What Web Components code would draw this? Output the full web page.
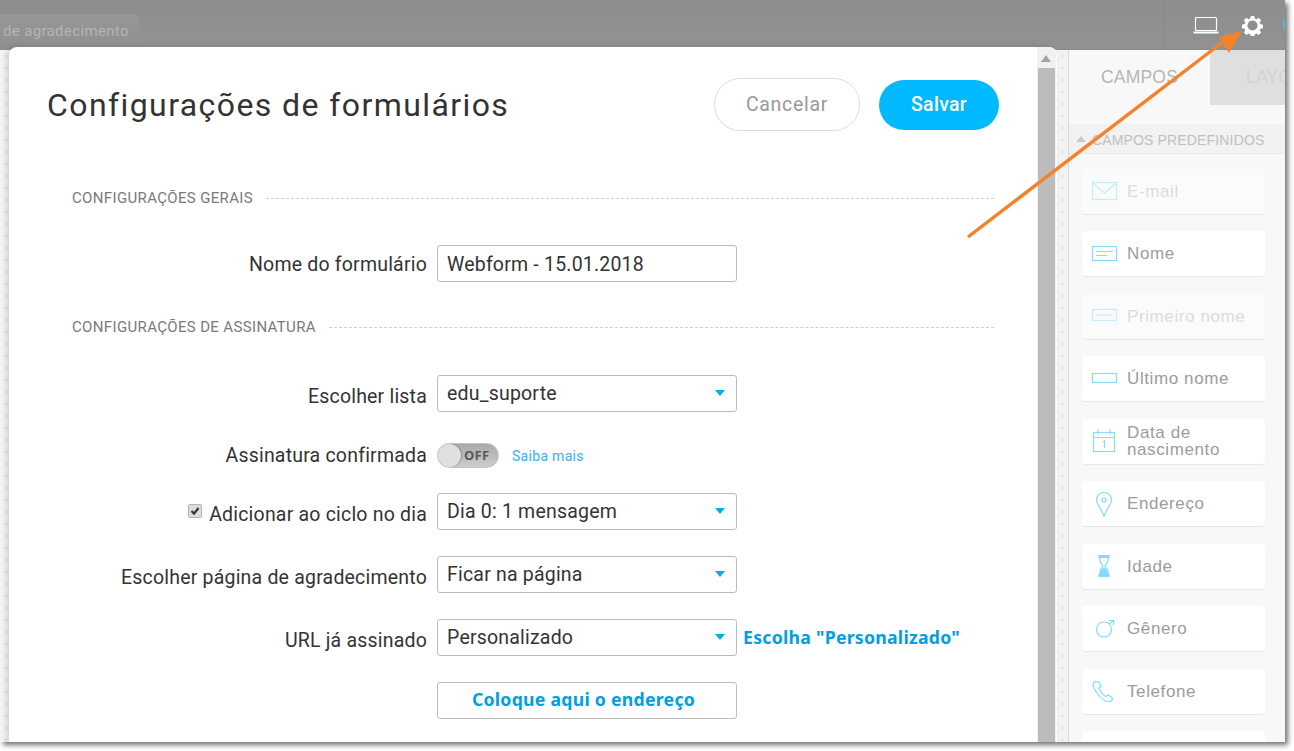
<!DOCTYPE html>
<html lang="pt"><head><meta charset="utf-8"><title>Configurações de formulários</title>
<style>
html,body{margin:0;padding:0;background:#fff;overflow:hidden}
body{width:1294px;height:751px;font-family:Roboto,sans-serif}
</style></head><body>
<app-window>
  <top-bar slot="top"></top-bar>
  <side-panel slot="side"></side-panel>
  <form-modal slot="modal">
    <section-title style="margin-top:26px">Configurações gerais</section-title>
    <form-row style="margin-top:39px" label-top="9"><span slot="label">Nome do formulário</span><field-box>Webform - 15.01.2018</field-box></form-row>
    <section-title style="margin-top:37px">Configurações de assinatura</section-title>
    <form-row style="margin-top:40px" label-top="11"><span slot="label">Escolher lista</span><field-box arrow>edu_suporte</field-box></form-row>
    <form-row style="margin-top:31px" label-top="0"><span slot="label">Assinatura confirmada</span><toggle-switch></toggle-switch><a-link>Saiba mais</a-link></form-row>
    <form-row style="margin-top:25px" label-top="11"><span slot="label"><check-mark></check-mark>Adicionar ao ciclo no dia</span><field-box arrow>Dia 0: 1 mensagem</field-box></form-row>
    <form-row style="margin-top:26px" label-top="11"><span slot="label">Escolher página de agradecimento</span><field-box arrow>Ficar na página</field-box></form-row>
    <form-row style="margin-top:26px" label-top="11"><span slot="label">URL já assinado</span><field-box arrow>Personalizado</field-box><note-text>Escolha "Personalizado"</note-text></form-row>
    <form-row style="margin-top:26px" label-top="0"><span slot="label"></span><field-box center><note-text>Coloque aqui o endereço</note-text></field-box></form-row>
  </form-modal>
  <arrow-note slot="over"></arrow-note>
</app-window>
<script>
function def(name, css, html, init){
  customElements.define(name, class extends HTMLElement{
    constructor(){super();const r=this.attachShadow({mode:'open'});r.innerHTML='<style>'+css+'</style>'+html;if(init)init(this,r);}
  });
}
def('app-window',`
:host{display:block;position:relative;width:1285px;height:742px;background:#f5f5f5;box-shadow:3px 3px 5px rgba(0,0,0,.55);overflow:visible}
.clip{position:absolute;inset:0;overflow:hidden;display:grid;grid-template-rows:50px 692px;grid-template-columns:1285px}
.main{display:flex;min-height:0;min-width:0}
.left{width:1057px;flex:none;background-color:#f4f4f4;background-image:radial-gradient(#dedede 1px,transparent 1.2px);background-size:12px 12px}
.dots{width:11px;flex:none;background-color:#f2f2f2;background-image:radial-gradient(#e2e2e2 1px,transparent 1.3px);background-size:11px 12px;border-right:1px solid #d8d8d8}
.modalwrap{position:absolute;left:9px;top:47px;bottom:0;width:1048px}
`,`<div class="clip"><slot name="top"></slot><div class="main"><div class="left"></div><div class="dots"></div><slot name="side"></slot></div>
<div class="modalwrap"><slot name="modal"></slot></div></div><slot name="over"></slot>`);

def('top-bar',`
:host{display:flex;align-items:flex-start;height:50px;position:relative;background:linear-gradient(#8d8d8d,#929292);box-shadow:inset 0 -1px 0 #8b8b8b}
.tab{margin-top:14px;width:141px;height:36px;box-sizing:border-box;background:linear-gradient(#979797,#8f8f8f);color:#b4b4b4;font:15px/34px Roboto,sans-serif;letter-spacing:.35px;padding-left:3px;white-space:nowrap;clip-path:polygon(0 0,134px 0,139px 4px,141px 100%,0 100%)}
.sp{flex:1}
.sep{width:1px;height:50px;background:#8a8a8a;margin-right:29px}
.lap{margin:16px 21px 0 0}
.gear{margin:15px 22px 0 2px}
.blip{width:2px;height:10px;margin-top:20px;background:#4fb9e0;border-radius:2px 0 0 2px;position:absolute;right:0;top:0}
`,`<div class="tab">de agradecimento</div><div class="sp"></div><div class="sep"></div>
<svg class="lap" width="26" height="19" viewBox="0 0 26 19" fill="none" stroke="#fff"><rect x="2.5" y="1.5" width="21" height="13" rx="1" stroke-width="1.2"/><path d="M.5 16.5h25" stroke-width="2"/></svg>
<svg class="gear" width="21" height="21" viewBox="0 0 24 24"><path fill="#fff" fill-rule="evenodd" d="M10 1h4l.6 3 1.9.8 2.5-1.7 2.9 2.900-1.700 2.500.8 1.900 3 .6v4l-3 .6-.8 1.900 1.700 2.500-2.900 2.900-2.500-1.700-1.900.8-.6 3h-4l-.6-3-1.900-.8-2.500 1.700-2.900-2.900 1.700-2.500-.8-1.900-3-.6v-4l3-.6.8-1.900-1.700-2.500 2.900-2.900 2.500 1.700 1.900-.8zM12 6.200a5.800 5.800 0 1 0 0 11.600 5.800 5.800 0 0 0 0-11.600z"/></svg>
<div class="blip"></div>`);

def('form-modal',`
:host{display:block;position:relative;height:100%;box-sizing:border-box;background:#fff;border-radius:8px 8px 0 0;box-shadow:-3px 0 6px rgba(0,0,0,.14);overflow:hidden}
.scroll{position:absolute;right:1px;top:0;bottom:0;width:19px;background:#f1f1f1;border-radius:0 8px 0 0}
.up{position:absolute;left:4px;top:8px;width:0;height:0;border:5px solid transparent;border-top:0;border-bottom:7px solid #a3a3a3;border-left-width:5px}
.thumb{position:absolute;left:1px;right:1px;top:21px;bottom:0;background:#bcbcbc}
.body{width:1028px;padding:0 38px 0 0;box-sizing:border-box}
header{display:flex;align-items:center;height:117px;padding-left:38px;box-sizing:border-box}
h1{flex:1;margin:0;font:400 32px/1 Roboto,sans-serif;letter-spacing:1.41px;color:#333;white-space:nowrap;position:relative;top:-1px}
button{font:500 19.5px/1 Roboto,sans-serif;border-radius:26px;padding:0;cursor:pointer}
.c{width:146px;height:53px;background:#fff;border:1px solid #dcdcdc;color:#999;margin:-2px 19px 0 0;font-weight:400;letter-spacing:.7px}
.s{width:120px;height:50px;background:#00b9ff;border:0;color:#fff;letter-spacing:.3px;margin-top:-1px}
`,`<div class="scroll"><div class="up"></div><div class="thumb"></div></div><div class="body">
<header><h1>Configurações de formulários</h1><button class="c">Cancelar</button><button class="s">Salvar</button></header>
<slot></slot></div>`);

def('section-title',`
:host{display:flex;align-items:center;gap:13px;margin-left:63px;height:16px;width:922px;color:#7a7a7a;font:400 15px/16px Roboto,sans-serif;text-transform:uppercase;letter-spacing:.35px;white-space:nowrap}
i{flex:1;border-top:1px dashed #cfcfcf;margin-top:1px}
`,`<slot></slot><i></i>`);

def('form-row',`
:host{display:grid;grid-template-columns:418px auto 1fr;column-gap:10px;align-items:center;font:400 19.5px/22px Roboto,sans-serif;color:#333;letter-spacing:.2px}
.l{text-align:right;white-space:nowrap;align-self:start}
.c{display:flex;align-items:center;grid-column:2 / 4}
`,`<div class="l"><slot name="label"></slot></div><div class="c"><slot></slot></div>`,(el,r)=>{
  const v=el.getAttribute('label-top');if(v)r.querySelector('.l').style.paddingTop=v+'px';
  if(v==='0')r.querySelector('.l').style.alignSelf='center';
});

def('field-box',`
:host{display:flex;align-items:center;box-sizing:border-box;width:300px;height:37px;border:1px solid #bdbdbd;border-radius:3px;background:#fff;padding:2px 9px 0;font:400 19.5px/1 Roboto,sans-serif;color:#333;letter-spacing:.2px;white-space:nowrap;position:relative}
:host([center]){justify-content:center;padding:0 7px 1px 0}
:host([arrow]){padding:0 9px}
.t{position:absolute;right:11px;top:14px;width:0;height:0;border:5px solid transparent;border-bottom:0;border-top:6px solid #00aeef}
:host(:not([arrow])) .t{display:none}
`,`<slot></slot><div class="t"></div>`);

def('toggle-switch',`
:host{display:block;position:relative;width:62px;height:25px;border-radius:13px;box-sizing:border-box;background:linear-gradient(#a9a9a9,#cdcdcd);border:1px solid #c4c4c4}
.k{position:absolute;left:0;top:0;width:23px;height:23px;border-radius:50%;background:#dfdfdf;box-shadow:1px 0 1px rgba(0,0,0,.25)}
.o{position:absolute;left:26px;top:0;font:700 13px/23px "Open Sans",Roboto,sans-serif;color:#595959;letter-spacing:.2px}
`,`<div class="k"></div><div class="o">OFF</div>`);

def('a-link',`:host{display:block;margin-left:13px;color:#36b0f2;font:400 14px/1 Roboto,sans-serif;letter-spacing:.3px;white-space:nowrap}`,`<slot></slot>`);

def('check-mark',`
:host{display:inline-flex;align-items:center;justify-content:center;width:14px;height:14px;box-sizing:border-box;background:#dcdcdc;border:1px solid #b5b5b5;border-radius:2px;margin-right:7px;vertical-align:1px;position:relative;top:-4px}
`,`<svg width="10" height="10" viewBox="0 0 10 10"><path d="M1.5 5l2.5 2.6L8.5 2" fill="none" stroke="#333" stroke-width="2.200"/></svg>`);

def('note-text',`:host{display:block;margin-left:6px;color:#009fe3;font:700 17.7px/1 "Noto Sans",sans-serif;letter-spacing:.25px;white-space:nowrap}
:host-context(field-box){margin-left:0}`,`<slot></slot>`);

def('side-panel',`
:host{display:flex;flex-direction:column;flex:1;min-width:0;background:#f8f8f8;overflow:hidden;font-family:"Liberation Sans",Arial,sans-serif}
.tabs{display:flex;height:55px;flex:none}
.t1{width:141px;color:#b6b6b6;font-size:17.5px;line-height:55px;text-align:center;letter-spacing:.2px}
.t2{flex:1;background:#dfdfdf;color:#d2d2d2;font-size:17.5px;line-height:55px;padding-left:36px;overflow:hidden;letter-spacing:.2px;white-space:nowrap}
.h{flex:none;margin-top:19px;height:29px;background:#f2f2f2;border-bottom:1px solid #e8e8e8;color:#c0c0c0;font-size:14px;line-height:30px;letter-spacing:.15px;display:flex;align-items:center;white-space:nowrap;padding-top:0}
.h span{position:relative;top:1px}
.h i{width:0;height:0;border:5px solid transparent;border-top:0;border-bottom:6px solid #c8c8c8;margin:0 6px 0 7px}
.list{display:flex;flex-direction:column;gap:17.5px;padding:14.5px 20px 0 13px}
`,`<div class="tabs"><div class="t1">CAMPOS</div><div class="t2">LAYOUT</div></div>
<div class="h"><i></i><span>CAMPOS PREDEFINIDOS</span></div>
<div class="list">
<field-card dim icon="mail">E-mail</field-card>
<field-card icon="name">Nome</field-card>
<field-card dim icon="first">Primeiro nome</field-card>
<field-card icon="last">Último nome</field-card>
<field-card icon="cal">Data de nascimento</field-card>
<field-card icon="pin">Endereço</field-card>
<field-card icon="hour">Idade</field-card>
<field-card icon="male">Gênero</field-card>
<field-card icon="phone">Telefone</field-card>
<field-card></field-card>
</div>`);

const icons={
mail:'<rect x="1.5" y="3.5" width="24" height="17"/><path d="M1.5 4l12 10 12-10"/>',
name:'<rect x="1.5" y="4.5" width="24" height="14"/><path d="M5 9.5h17M5 13.5h11"/>',
first:'<rect x="1.5" y="5.5" width="24" height="11"/><path d="M5 11h17"/>',
last:'<rect x="1.5" y="6.5" width="24" height="9"/>',
cal:'<rect x="2.5" y="3.5" width="21" height="19"/><path d="M2.5 8.5h21M7 .5v5M19 .5v5"/><path d="M12 13l1.5-1v7"/>',
pin:'<path d="M13 24C10 16 5.500 12 5.500 8a7.500 7.500 0 0 1 15 0c0 4-4.500 8-7.500 16z"/><circle cx="13" cy="8" r="2"/>',
hour:'<path d="M8 1.500h10v2H8zM8 20.500h10v2H8z" fill="#84dcfb"/><path d="M9 3.500v3c0 3 3 4 3 5.500s-3 2.500-3 5.500v3h8v-3c0-3-3-4-3-5.500s3-2.500 3-5.500v-3z"/><path d="M9.500 20v-2.500L13 14l3.500 3.500V20z" fill="#84dcfb"/>',
male:'<circle cx="13" cy="12.500" r="7.500"/><path d="M18.500 7l4-3.500M18 3.500h4.500V8"/>',
phone:'<path d="M4 2.500L2.500 4c-1 2 1 7 5 12s9 7 12 6.500l2-2-.5-2-4-2.500-2 1.500c-2-.5-6-5-7-8.500l2-1.500L8 3z"/>'
};
def('field-card',`
:host{display:flex;align-items:center;box-sizing:border-box;height:45px;flex:none;background:#fff;border-radius:3px;box-shadow:0 1px 1px rgba(0,0,0,.07);color:#9c9c9c;font-size:17px;line-height:17px;letter-spacing:.6px}
:host([dim]){background:#fbfbfb;color:#dcdcdc}
:host([dim]) svg{opacity:.45}
svg{width:26px;height:24px;margin:0 10px 0 9px;flex:none;fill:none;stroke:#84dcfb;stroke-width:1.200;overflow:visible}
`,`<svg viewBox="0 0 26 24"></svg><div><slot></slot></div>`,(el,r)=>{
  const i=el.getAttribute('icon');if(i)r.querySelector('svg').innerHTML=icons[i];else r.querySelector('svg').style.visibility='hidden';
});

def('arrow-note',`:host{position:absolute;left:0;top:0;width:1285px;height:742px;pointer-events:none}svg{display:block}`,
`<svg width="1285" height="742" viewBox="0 0 1285 742"><path d="M968 237L1228 38" stroke="#f5822a" stroke-width="3.400" fill="none"/><path d="M1242 31L1219 37L1229 53Z" fill="#f5822a"/></svg>`);
</script>
</body></html>
